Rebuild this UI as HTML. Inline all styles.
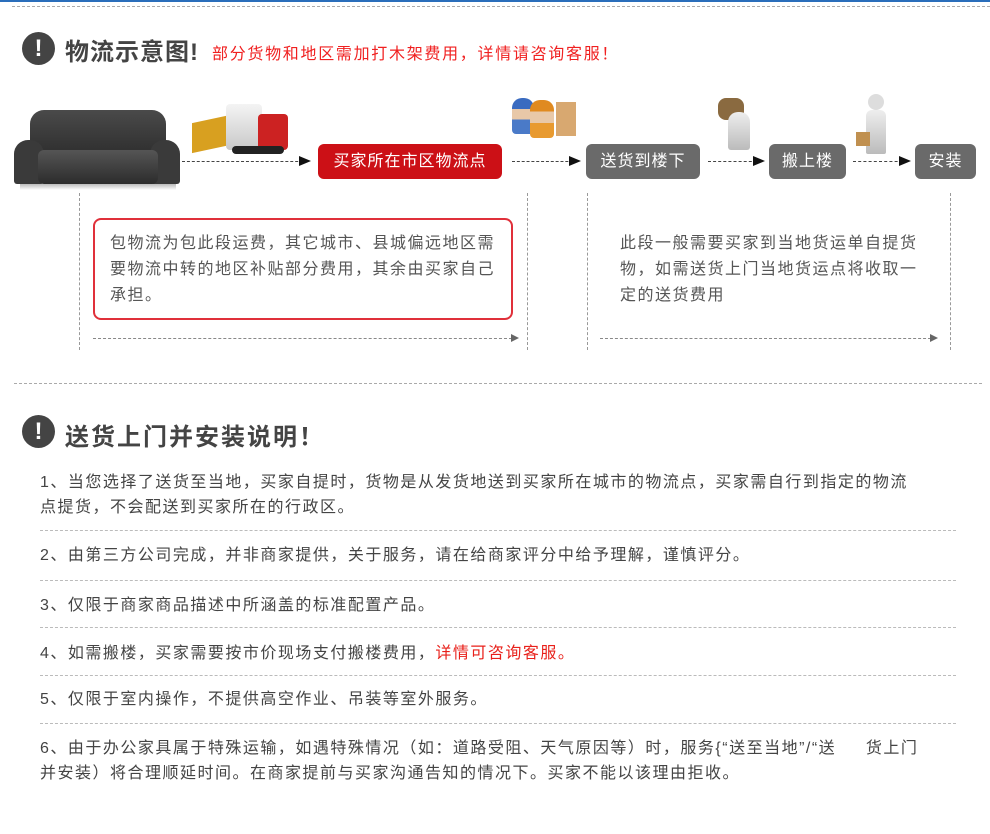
<!DOCTYPE html>
<html><head><meta charset="utf-8">
<style>
*{margin:0;padding:0;box-sizing:border-box}
body{width:990px;height:834px;background:#fff;position:relative;overflow:hidden;font-family:"Liberation Sans","Noto Sans CJK SC",sans-serif;color:#444}
.a{position:absolute}
.hd{border-top:1px dashed #aaa}
.vd{border-left:1px dashed #999}
.circ{width:33px;height:33px;border-radius:50%;background:#444;color:#fff;font-weight:bold;font-size:24px;line-height:33px;text-align:center}
.box{height:35px;border-radius:6px;color:#fff;font-size:16px;line-height:35px;text-align:center;letter-spacing:1px}
.grey{background:#6a6a6a}
.arr{height:0;border-top:1px dashed #444}
.arr:after{content:"";position:absolute;right:-3px;top:-6px;border-left:12px solid #111;border-top:5px solid transparent;border-bottom:5px solid transparent}
.arr2{height:0;border-top:1px dashed #888}
.arr2:after{content:"";position:absolute;right:-2px;top:-5px;border-left:8px solid #666;border-top:4px solid transparent;border-bottom:4px solid transparent}
.li{left:40px;font-size:16px;letter-spacing:1.5px;color:#444;line-height:25px;white-space:nowrap}
.sep{left:40px;width:916px;border-top:1px dashed #bbb}
</style></head><body>
<div class="a" style="left:0;top:0;width:990px;height:2px;background:#2a6ebb"></div>
<div class="a hd" style="left:12px;top:6px;width:978px"></div>

<div class="a circ" style="left:22px;top:32px">!</div>
<div class="a" style="left:65px;top:32px;font-size:24px;font-weight:bold;color:#444;letter-spacing:1px">物流示意图!</div>
<div class="a" style="left:212px;top:40px;font-size:16px;letter-spacing:1.7px;color:#f02020;white-space:nowrap">部分货物和地区需加打木架费用，详情请咨询客服！</div>

<!-- sofa -->
<div class="a" style="left:30px;top:110px;width:136px;height:52px;background:linear-gradient(#4a4a4a,#2a2a2a);border-radius:14px 14px 4px 4px"></div>
<div class="a" style="left:14px;top:140px;width:30px;height:44px;background:#3a3a3a;border-radius:14px 14px 3px 3px"></div>
<div class="a" style="left:150px;top:140px;width:30px;height:44px;background:#3a3a3a;border-radius:14px 14px 3px 3px"></div>
<div class="a" style="left:38px;top:150px;width:120px;height:34px;background:linear-gradient(#555,#2c2c2c);border-radius:6px"></div>
<div class="a" style="left:20px;top:184px;width:156px;height:6px;background:linear-gradient(#bbb,#fff)"></div>
<!-- truck -->
<div class="a" style="left:192px;top:118px;width:48px;height:30px;background:#d8a020;transform:skewY(-12deg)"></div>
<div class="a" style="left:226px;top:104px;width:36px;height:46px;background:linear-gradient(#f4f4f4,#c8c8c8);border-radius:4px"></div>
<div class="a" style="left:258px;top:114px;width:30px;height:36px;background:#c22;border-radius:4px"></div>
<div class="a" style="left:232px;top:146px;width:52px;height:8px;background:#222;border-radius:4px"></div>
<!-- workers -->
<div class="a" style="left:512px;top:98px;width:22px;height:36px;background:linear-gradient(#3a6bc0 30%,#e8c8a8 30%,#e8c8a8 60%,#4a7ac8 60%);border-radius:10px 10px 4px 4px"></div>
<div class="a" style="left:530px;top:100px;width:24px;height:38px;background:linear-gradient(#e08a20 30%,#e8c8a8 30%,#e8c8a8 60%,#e89a30 60%);border-radius:10px 10px 4px 4px"></div>
<div class="a" style="left:556px;top:102px;width:20px;height:34px;background:#d8a870"></div>
<!-- carrier -->
<div class="a" style="left:718px;top:98px;width:26px;height:22px;background:#8a6a40;border-radius:8px"></div>
<div class="a" style="left:728px;top:112px;width:22px;height:38px;background:linear-gradient(#eee,#bbb);border-radius:10px 10px 3px 3px"></div>
<div class="a" style="left:868px;top:94px;width:16px;height:16px;background:#ddd;border-radius:50%"></div>
<div class="a" style="left:866px;top:110px;width:20px;height:44px;background:linear-gradient(#eee,#bbb);border-radius:6px 6px 2px 2px"></div>
<div class="a" style="left:856px;top:132px;width:14px;height:14px;background:#c09050"></div>

<div class="a arr" style="left:182px;top:161px;width:126px"></div>
<div class="a box" style="left:318px;top:144px;width:184px;background:#cc1016">买家所在市区物流点</div>
<div class="a arr" style="left:512px;top:161px;width:66px"></div>
<div class="a box grey" style="left:586px;top:144px;width:114px">送货到楼下</div>
<div class="a arr" style="left:708px;top:161px;width:54px"></div>
<div class="a box grey" style="left:769px;top:144px;width:77px">搬上楼</div>
<div class="a arr" style="left:853px;top:161px;width:55px"></div>
<div class="a box grey" style="left:915px;top:144px;width:61px">安装</div>

<div class="a vd" style="left:79px;top:193px;height:157px"></div>
<div class="a vd" style="left:527px;top:193px;height:157px"></div>
<div class="a vd" style="left:587px;top:193px;height:157px"></div>
<div class="a vd" style="left:950px;top:193px;height:157px"></div>

<div class="a" style="left:93px;top:218px;width:420px;height:102px;border:2px solid #e0303a;border-radius:8px"></div>
<div class="a" style="left:110px;top:231px;font-size:16px;letter-spacing:1.5px;line-height:26px;color:#555;white-space:nowrap">包物流为包此段运费，其它城市、县城偏远地区需<br>要物流中转的地区补贴部分费用，其余由买家自己<br>承担。</div>
<div class="a" style="left:620px;top:231px;font-size:16px;letter-spacing:1.5px;line-height:26px;color:#555;white-space:nowrap">此段一般需要买家到当地货运单自提货<br>物，如需送货上门当地货运点将收取一<br>定的送货费用</div>
<div class="a arr2" style="left:93px;top:338px;width:424px"></div>
<div class="a arr2" style="left:600px;top:338px;width:336px"></div>

<div class="a hd" style="left:14px;top:383px;width:968px"></div>

<div class="a circ" style="left:22px;top:415px">!</div>
<div class="a" style="left:65px;top:417px;font-size:24px;font-weight:bold;color:#444;letter-spacing:2px">送货上门并安装说明！</div>

<div class="a li" style="top:470px">1、当您选择了送货至当地，买家自提时，货物是从发货地送到买家所在城市的物流点，买家需自行到指定的物流<br>点提货，不会配送到买家所在的行政区。</div>
<div class="a sep" style="top:530px"></div>
<div class="a li" style="top:543px">2、由第三方公司完成，并非商家提供，关于服务，请在给商家评分中给予理解，谨慎评分。</div>
<div class="a sep" style="top:580px"></div>
<div class="a li" style="top:593px">3、仅限于商家商品描述中所涵盖的标准配置产品。</div>
<div class="a sep" style="top:627px"></div>
<div class="a li" style="top:641px">4、如需搬楼，买家需要按市价现场支付搬楼费用，<span style="color:#e8201a">详情可咨询客服。</span></div>
<div class="a sep" style="top:675px"></div>
<div class="a li" style="top:687px">5、仅限于室内操作，不提供高空作业、吊装等室外服务。</div>
<div class="a sep" style="top:723px"></div>
<div class="a li" style="top:736px">6、由于办公家具属于特殊运输，如遇特殊情况（如：道路受阻、天气原因等）时，服务{“送至当地”/“送&nbsp;&nbsp;&nbsp;&nbsp;&nbsp;货上门<br>并安装）将合理顺延时间。在商家提前与买家沟通告知的情况下。买家不能以该理由拒收。</div>
</body></html>
